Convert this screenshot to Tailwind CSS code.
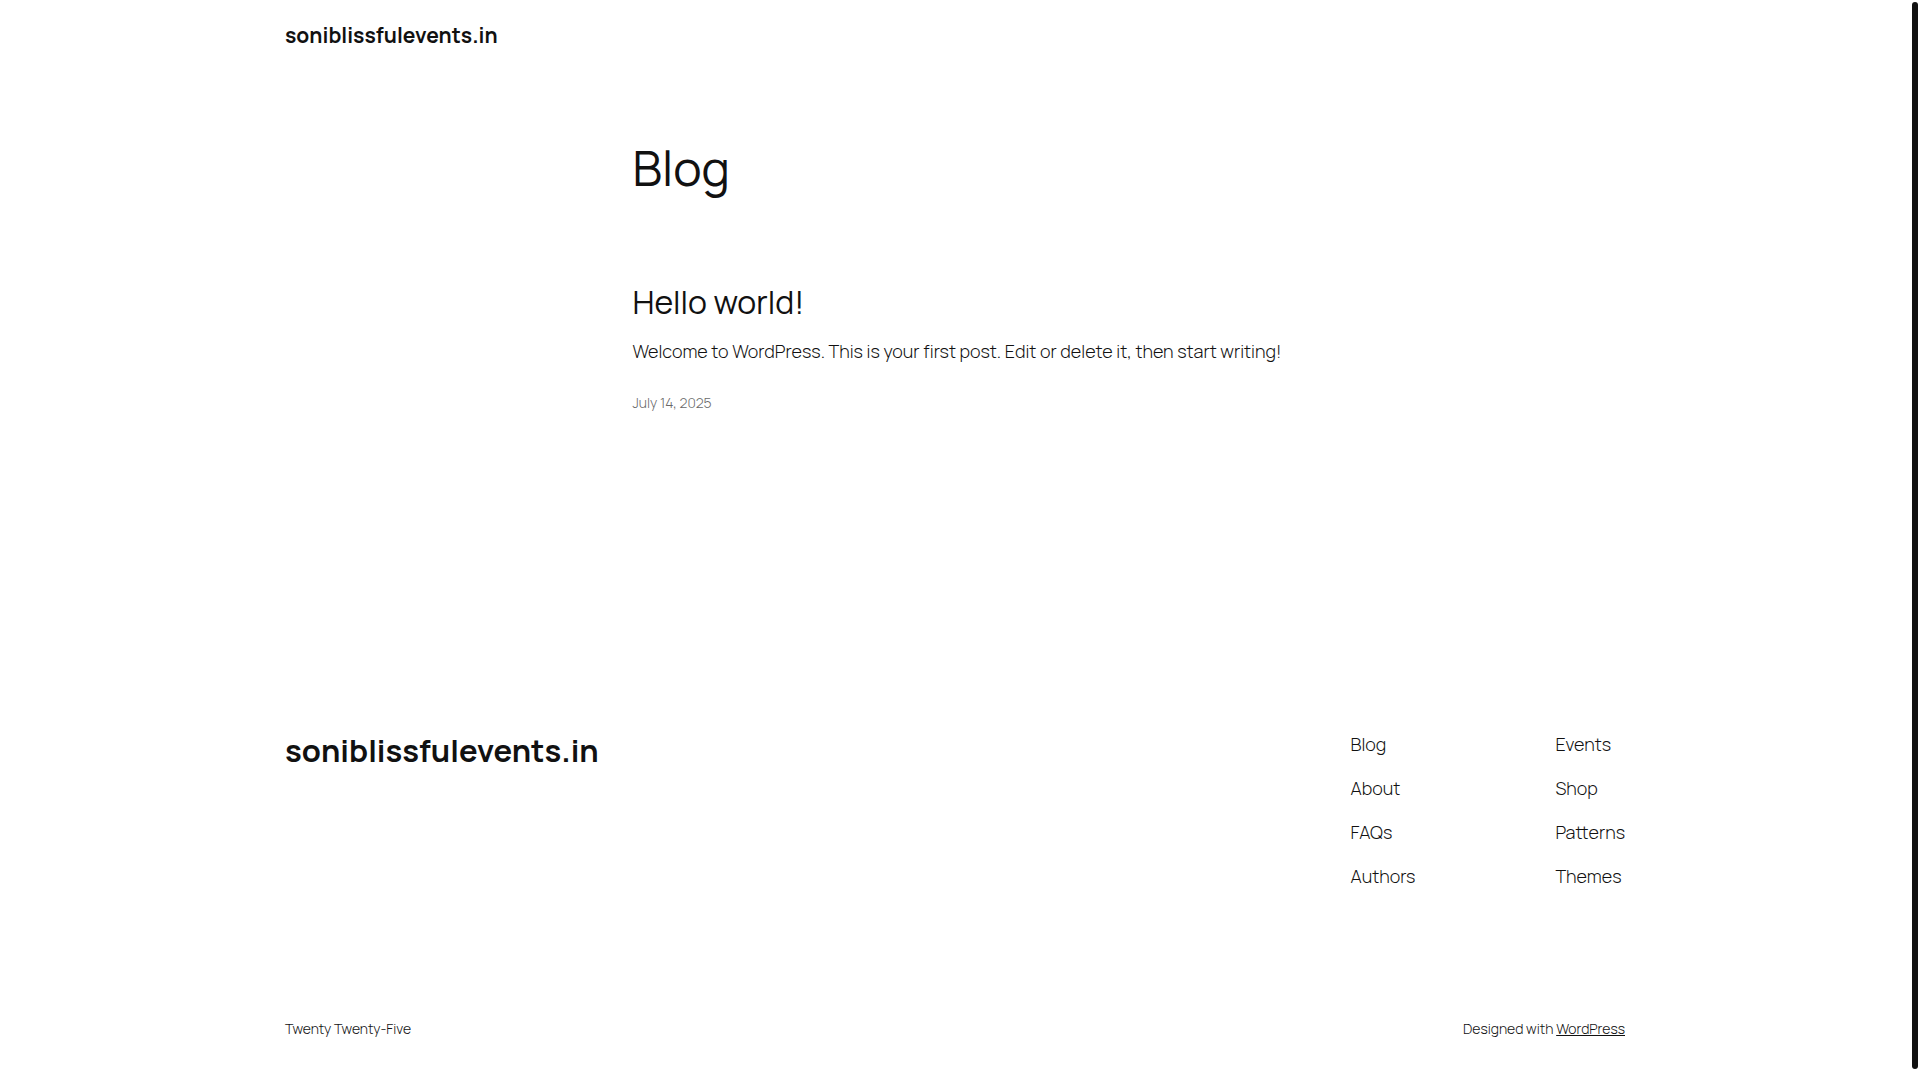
<!DOCTYPE html>
<html lang="en">
<head>
    <meta charset="UTF-8">
    <meta name="viewport" content="width=device-width, initial-scale=1.0">
    <title>Blog - soniblissfulevents.in</title>
    <script src="https://cdn.jsdelivr.net/npm/@tailwindcss/browser@4"></script>
</head>
<body class="bg-white text-[#111111] font-['Manrope','Inter',sans-serif] font-light min-h-screen flex flex-col pr-2.5">
    <!-- Site header -->
    <header class="w-full max-w-[1340px] mx-auto pt-5">
        <a href="#" class="block text-[21px] leading-[30px] font-bold">soniblissfulevents.in</a>
    </header>

    <!-- Post list -->
    <main class="w-full max-w-[645px] mx-auto pt-[90px]">
        <h1 class="text-[48px] leading-[56px] font-normal">Blog</h1>
        <article class="pt-[88px]">
            <h2 class="text-[32px] leading-9 font-normal"><a href="#">Hello world!</a></h2>
            <p class="pt-[17px] text-lg leading-7 md:whitespace-nowrap">Welcome to WordPress. This is your first post. Edit or delete it, then start writing!</p>
            <time datetime="2025-07-14" class="block pt-7 text-sm leading-5 text-[#686868]"><a href="#">July 14, 2025</a></time>
        </article>
    </main>

    <!-- Site footer -->
    <footer class="w-full max-w-[1340px] mx-auto pt-[317px]">
        <div class="flex justify-between items-start">
            <a href="#" class="pt-0.5 text-[31px] leading-9 font-bold">soniblissfulevents.in</a>
            <div class="flex gap-[140px] text-lg leading-7">
                <nav class="flex flex-col gap-4">
                    <a href="#">Blog</a>
                    <a href="#">About</a>
                    <a href="#">FAQs</a>
                    <a href="#">Authors</a>
                </nav>
                <nav class="flex flex-col gap-4">
                    <a href="#">Events</a>
                    <a href="#">Shop</a>
                    <a href="#">Patterns</a>
                    <a href="#">Themes</a>
                </nav>
            </div>
        </div>
        <div class="flex justify-between pt-[129px] text-sm leading-5">
            <p>Twenty Twenty-Five</p>
            <p>Designed with <a href="#" class="underline">WordPress</a></p>
        </div>
    </footer>

    <!-- Scroll indicator -->
    <div class="fixed top-0.5 bottom-[11px] right-0.5 w-1.5 rounded-full bg-[#111111]"></div>
</body>
</html>
